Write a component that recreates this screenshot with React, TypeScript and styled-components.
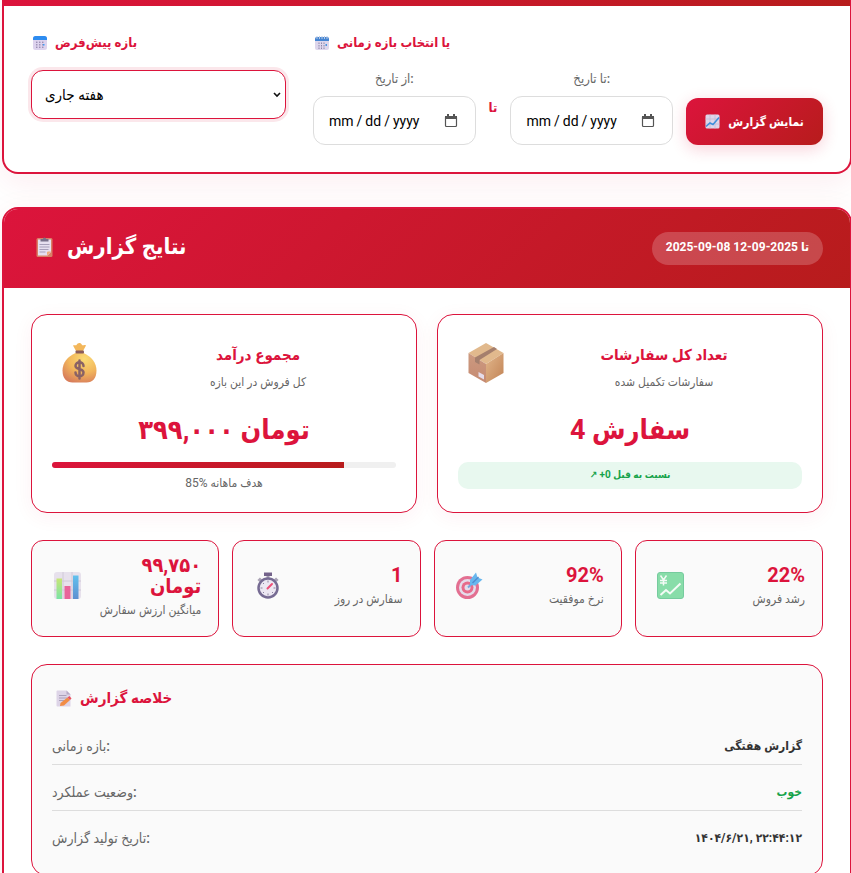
import React from "react";
import styled, { createGlobalStyle } from "styled-components";

const red = "#dc143c";
const fade = "linear-gradient(135deg, #dc143c 0%, #b71c1c 100%)";

const chevron =
  "url(\"data:image/svg+xml,%3Csvg xmlns='http://www.w3.org/2000/svg' viewBox='0 0 8 6'%3E%3Cpath d='M1 1l3 3 3-3' fill='none' stroke='%23111' stroke-width='1.6'/%3E%3C/svg%3E\")";
const calendarGlyph =
  "url(\"data:image/svg+xml,%3Csvg xmlns='http://www.w3.org/2000/svg' viewBox='0 0 14 14'%3E%3Cpath d='M1 2h2V0h2v2h4V0h2v2h2v3H1z' fill='%23555'/%3E%3Crect x='1.5' y='2.5' width='11' height='10' rx='1' fill='none' stroke='%23555' stroke-width='1.2'/%3E%3C/svg%3E\")";

const GlobalStyle = createGlobalStyle`
  *, *::before, *::after { box-sizing: border-box; }
  html { scrollbar-width: none; }
  body { margin: 0; background: #fff; overflow-x: hidden; }
  body, input, select, button {
    font-family: Roboto, "DejaVu Sans Condensed", "DejaVu Sans", sans-serif;
  }
  h2, h3, p, dl, dd, dt { margin: 0; }
  svg { display: block; flex: none; }
`;

const Page = styled.main`
  display: flex;
  flex-direction: column;
  gap: 33px;
  margin: 0 -1px 0 2px;
`;

const FilterCard = styled.section`
  border: 2px solid ${red};
  border-top: 0;
  border-radius: 0 0 16px 16px;
  background: #fff;
  box-shadow: 0 8px 32px rgba(220, 20, 60, 0.08);
`;

const FilterStrip = styled.div`
  height: 6px;
  background: ${fade};
`;

const FilterGrid = styled.div`
  display: grid;
  grid-template-columns: 1fr 2fr;
  gap: 27px;
  padding: 27px;
`;

const Field = styled.div`
  display: flex;
  flex-direction: column;
`;

const FieldTitle = styled.label`
  display: flex;
  align-items: center;
  gap: 8px;
  height: 19px;
  margin-bottom: 18px;
  padding-left: 2px;
  color: ${red};
  font-size: 13px;
  font-weight: 700;
`;

const PresetSelect = styled.select`
  width: 100%;
  height: 49px;
  padding: 0 13px;
  border: 1px solid ${red};
  border-radius: 12px;
  appearance: none;
  background: #fff ${chevron} no-repeat right 4px center / 8px 6px;
  color: #000;
  font-size: 15px;
  outline: none;
  box-shadow: 0 0 0 3px rgba(220, 20, 60, 0.1);
`;

const RangeRow = styled.div`
  display: flex;
  align-items: center;
  gap: 13px;
`;

const DateField = styled.div`
  flex: 1 1 0;
  min-width: 0;
  display: flex;
  flex-direction: column;
  gap: 8px;
`;

const DateLabel = styled.label`
  color: #666;
  font-size: 13px;
  line-height: 18px;
  font-weight: 500;
  text-align: center;
`;

const DateInput = styled.input`
  width: 100%;
  height: 49px;
  padding: 0 17px 0 14px;
  border: 1px solid #ddd;
  border-radius: 12px;
  background: #fff;
  color: #000;
  font-size: 14px;
  &::-webkit-datetime-edit { font-family: Roboto, sans-serif; }
  &::-webkit-datetime-edit-text { padding: 0 2px; }
  &::-webkit-calendar-picker-indicator {
    width: 14px;
    height: 14px;
    padding: 0;
    background: ${calendarGlyph} no-repeat center / 14px 14px;
  }
`;

const Between = styled.span`
  color: ${red};
  font-size: 13px;
  font-weight: 700;
`;

const ShowButton = styled.button`
  display: flex;
  align-items: center;
  justify-content: center;
  align-self: flex-end;
  gap: 8px;
  height: 47px;
  width: 137px;
  padding: 0;
  border: 0;
  border-radius: 12px;
  background: ${fade};
  color: #fff;
  font-size: 12px;
  font-weight: 700;
  white-space: nowrap;
  box-shadow: 0 4px 16px rgba(220, 20, 60, 0.2);
`;

const ResultCard = styled.section`
  border: 2px solid ${red};
  border-radius: 16px;
  background: #fff;
  overflow: hidden;
  box-shadow: 0 8px 32px rgba(220, 20, 60, 0.08);
`;

const ResultHeader = styled.header`
  display: flex;
  align-items: center;
  justify-content: space-between;
  height: 79px;
  padding: 0 27px;
  background: ${fade};
  color: #fff;
`;

const ResultTitle = styled.h2`
  display: flex;
  align-items: center;
  gap: 14px;
  padding: 0 0 4px 5px;
  font-size: 22px;
  line-height: 36px;
`;

const RangeBadge = styled.span`
  padding: 0 14px;
  border-radius: 20px;
  background: rgba(255, 255, 255, 0.2);
  font-size: 12px;
  line-height: 30px;
  height: 33px;
  font-weight: 700;
`;

const ResultBody = styled.div`
  display: flex;
  flex-direction: column;
  gap: 27px;
  padding: 26px 27px;
`;

const StatGrid = styled.div`
  display: grid;
  grid-template-columns: 1fr 1fr;
  gap: 20px;
`;

const StatCard = styled.article`
  height: 199px;
  padding: 26px 20px 20px;
  border: 1px solid ${red};
  border-radius: 16px;
  background: #fff;
  text-align: center;
  box-shadow: 0 4px 20px rgba(220, 20, 60, 0.06);
`;

const StatHead = styled.div`
  display: flex;
  align-items: center;
  gap: 13px;
`;

const StatIcon = styled.div`
  display: flex;
  justify-content: center;
  width: 55px;
  padding-bottom: 10px;
`;

const StatInfo = styled.div`
  flex: 1;
`;

const StatTitle = styled.h3`
  color: ${red};
  font-size: 15px;
  line-height: 28px;
`;

const StatNote = styled.p`
  color: #666;
  font-size: 12px;
  line-height: 26px;
`;

const StatValue = styled.p`
  padding: 10px 0 6px;
  color: ${red};
  font-size: 27px;
  line-height: 51px;
  font-weight: 700;
`;

const Track = styled.div`
  height: 6px;
  border-radius: 3px;
  background: #f0f0f0;
  overflow: hidden;
`;

const TrackFill = styled.div`
  height: 100%;
  background: ${fade};
`;

const TrackNote = styled.p`
  margin-top: 4px;
  color: #666;
  font-size: 12px;
  line-height: 22px;
`;

const Trend = styled.p`
  border-radius: 10px;
  background: #e8f8ef;
  color: #16a34a;
  font-size: 10px;
  line-height: 26px;
  height: 27px;
  font-weight: 700;
`;

const MiniGrid = styled.div`
  display: grid;
  grid-template-columns: repeat(4, 1fr);
  gap: 13px;
`;

const MiniCard = styled.article`
  display: flex;
  align-items: center;
  justify-content: space-between;
  height: 97px;
  padding: 0 17px 0 20px;
  border: 1px solid ${red};
  border-radius: 12px;
  background: #fafafa;
`;

const MiniIcon = styled.div`
  display: flex;
  justify-content: center;
  width: 30px;
  padding-bottom: 6px;
`;

const MiniInfo = styled.div`
  width: min-content;
  text-align: right;
`;

const MiniValue = styled.p`
  color: ${red};
  font-size: 20px;
  line-height: 21px;
  font-weight: 700;
`;

const MiniLabel = styled.p`
  color: #666;
  font-size: 12px;
  line-height: 26px;
  white-space: nowrap;
`;

const Summary = styled.section`
  padding: 18px 20px;
  border: 1px solid ${red};
  border-radius: 16px;
  background: #fafafa;
`;

const SummaryTitle = styled.h3`
  display: flex;
  align-items: center;
  gap: 8px;
  margin-bottom: 14px;
  padding-left: 4px;
  color: ${red};
  font-size: 15px;
  line-height: 30px;
`;

const SummaryRow = styled.div`
  display: flex;
  justify-content: space-between;
  align-items: center;
  height: 46px;
  padding-top: 8px;
  border-bottom: 1px solid #ddd;
  &:first-child { height: 38px; padding-top: 0; }
  &:last-child { border-bottom: 0; }
`;

const SummaryKey = styled.dt`
  color: #666;
  font-size: 14px;
  font-weight: 500;
`;

const SummaryValue = styled.dd<{ $good?: boolean }>`
  color: ${(p) => (p.$good ? "#16a34a" : "#333")};
  font-size: 12px;
  font-weight: 700;
`;

const CalendarIcon = () => (
  <svg width="14" height="14" viewBox="0 0 28 28" aria-hidden="true">
    <rect width="28" height="28" rx="5" fill="#ddd3ee" />
    <path d="M0 8V5a5 5 0 0 1 5-5h18a5 5 0 0 1 5 5v3z" fill="#2d8cf0" />
    <g fill="#9b8fb4">
      {[12, 17, 22].map((y) => [6, 12, 18].map((x) => <rect key={`${x}-${y}`} x={x} y={y - 1} width="3" height="3" rx="1" />))}
    </g>
    <rect x="20" y="16" width="3" height="3" fill="#3d9cf5" />
  </svg>
);

const SpiralCalendarIcon = () => (
  <svg width="14" height="14" viewBox="0 0 28 28" aria-hidden="true">
    <rect y="2" width="28" height="26" rx="4" fill="#ddd6ec" />
    <path d="M0 10V6a4 4 0 0 1 4-4h20a4 4 0 0 1 4 4v4z" fill="#4585d2" />
    <path d="M4 0v6M9 0v6M14 0v6M19 0v6M24 0v6" stroke="#b9cbe6" strokeWidth="2" />
    <g fill="#8d85a8">
      {[13, 18, 23].map((y) => [7, 12, 17].map((x) => <rect key={`${x}-${y}`} x={x} y={y} width="2" height="3" />))}
    </g>
    <rect x="21" y="16" width="3" height="4" fill="#4b93df" />
  </svg>
);

const ChartIcon = () => (
  <svg width="15" height="15" viewBox="0 0 30 30" aria-hidden="true">
    <rect x="1" y="1" width="28" height="28" rx="3" fill="#ded5e9" />
    <path d="M1 10h28M1 20h28M10 1v28M20 1v28" stroke="#c3b9d3" strokeWidth="1.5" />
    <path d="M2 25l8-7 6 3 12-14" fill="none" stroke="#3d8fdb" strokeWidth="3" />
  </svg>
);

const ClipboardIcon = () => (
  <svg width="17" height="20" viewBox="0 0 34 40" aria-hidden="true">
    <rect x="1" y="2" width="32" height="38" rx="3" fill="#d98066" />
    <path d="M4 5h26v25l-7 7H4z" fill="#e6dff0" />
    <path d="M30 29l-8 8v-6a2 2 0 0 1 2-2z" fill="#f0ab77" />
    <path d="M9 9V4h5a3 3 0 0 1 6 0h5v5z" fill="#77708a" />
    <path d="M7 15h20M7 20h20M7 25h18M7 30h12" stroke="#a79fba" strokeWidth="2" />
  </svg>
);

const MoneyBagIcon = () => (
  <svg width="35" height="40" viewBox="0 0 70 80" aria-hidden="true">
    <defs>
      <radialGradient id="bagBody" cx="65%" cy="20%" r="85%">
        <stop offset="0" stopColor="#fbdc75" />
        <stop offset="0.55" stopColor="#f2b65c" />
        <stop offset="1" stopColor="#d97f5b" />
      </radialGradient>
    </defs>
    <path d="M28 16L22 5c3-2 6 1 7-1 2-4 8-6 11 0 2 2 5-2 8 1l-6 11z" fill="#f3b75b" />
    <path d="M27 20C11 27 1 40 1 55c0 16 8 24 20 24h28c12 0 20-8 20-24C69 40 59 27 43 20z" fill="url(#bagBody)" />
    <rect x="27" y="15" width="17" height="6" rx="2" fill="#8a5d5c" />
    <path d="M43 46c0-10-16-10-16 0 0 8 16 4 16 13 0 10-16 10-16 0M35 35v36" fill="none" stroke="#8a6265" strokeWidth="5" strokeLinecap="round" />
  </svg>
);

const PackageIcon = () => (
  <svg width="36" height="40" viewBox="0 0 72 80" aria-hidden="true">
    <defs>
      <linearGradient id="boxSide" x1="0" y1="0" x2="1" y2="1">
        <stop offset="0" stopColor="#e2b78c" />
        <stop offset="1" stopColor="#c18254" />
      </linearGradient>
      <linearGradient id="boxFront" x1="0" y1="0" x2="0" y2="1">
        <stop offset="0" stopColor="#cc9a80" />
        <stop offset="1" stopColor="#c58a72" />
      </linearGradient>
    </defs>
    <path d="M36 0l35 20-35 22L1 20z" fill="#e1b98d" />
    <path d="M1 20l35 22v38L1 60z" fill="url(#boxFront)" />
    <path d="M71 20L36 42v38l35-20z" fill="url(#boxSide)" />
    <path d="M14 29l38-21 6 4-35 22v9l-9-5z" fill="#a57f6d" />
    <path d="M21 58l11 6v9l-11-6z" fill="#e5dcea" />
  </svg>
);

const BarsIcon = () => (
  <svg width="27" height="27" viewBox="0 0 54 54" aria-hidden="true">
    <defs>
      <linearGradient id="barGreen" x1="0" y1="0" x2="0" y2="1">
        <stop offset="0" stopColor="#c7e676" />
        <stop offset="1" stopColor="#7be3a6" />
      </linearGradient>
      <linearGradient id="barBlue" x1="0" y1="0" x2="0" y2="1">
        <stop offset="0" stopColor="#62c1ee" />
        <stop offset="1" stopColor="#5d8fd0" />
      </linearGradient>
    </defs>
    <rect width="54" height="54" rx="6" fill="#e7e1ec" />
    <path d="M0 18h54M0 36h54M18 0v54M36 0v54" stroke="#d0cad8" strokeWidth="2" />
    <path d="M5 13h11v41H5z" fill="url(#barGreen)" />
    <path d="M21 28h12v26H21z" fill="#e8649a" />
    <path d="M38 7h11v47H38z" fill="url(#barBlue)" />
  </svg>
);

const StopwatchIcon = () => (
  <svg width="22" height="27" viewBox="0 0 44 54" aria-hidden="true">
    <path d="M14 1h16v7H14z" fill="#73628a" />
    <path d="M19 8h6v6h-6z" fill="#a7a0b3" />
    <path d="M3 18l5-5M41 18l-5-5" stroke="#aaa3b5" strokeWidth="6" />
    <circle cx="22" cy="32" r="19" fill="#ece7f2" stroke="#766b93" strokeWidth="5" />
    <path d="M22 17v4M22 43v4M7 32h4M33 32h4M12 22l2 2M30 40l2 2M12 42l2-2" stroke="#8c829f" strokeWidth="2" />
    <path d="M21 33l9-9" stroke="#ed4f78" strokeWidth="4" strokeLinecap="round" />
  </svg>
);

const TargetIcon = () => (
  <svg width="27" height="27" viewBox="0 0 54 54" aria-hidden="true">
    <circle cx="23" cy="31" r="23" fill="#e36f91" />
    <circle cx="23" cy="31" r="17" fill="#e5dcea" />
    <circle cx="23" cy="31" r="12" fill="#e76b8b" />
    <circle cx="23" cy="31" r="6" fill="#e5dcea" />
    <path d="M24 31l9-9" stroke="#75a9df" strokeWidth="4" />
    <path d="M28 26V16L40 1l3 10 10 4-14 12z" fill="#68b7ee" />
    <path d="M33 22L45 10" stroke="#508ed0" strokeWidth="3" />
  </svg>
);

const YenIcon = () => (
  <svg width="27" height="27" viewBox="0 0 54 54" aria-hidden="true">
    <rect x="1" y="1" width="52" height="52" rx="5" fill="#88dda9" stroke="#76cb9e" strokeWidth="2" />
    <path d="M7 7l6 9 6-9M13 16v11M6 17h14M6 22h14" fill="none" stroke="#f4fbf6" strokeWidth="3" />
    <path d="M7 46l11-10 8 7 21-20" fill="none" stroke="#f4fbf6" strokeWidth="4" />
  </svg>
);

const MemoIcon = () => (
  <svg width="16" height="17" viewBox="0 0 32 34" aria-hidden="true">
    <path d="M3 1h18l8 8v24H3a2 2 0 0 1-2-2V3a2 2 0 0 1 2-2z" fill="#ddd4e7" />
    <path d="M21 1l8 8h-8z" fill="#b6a9c6" />
    <path d="M6 11h15M6 16h17M6 21h12" stroke="#aaa0ba" strokeWidth="2" />
    <path d="M9 26l14-11 5 5-12 11-8 1z" fill="#f28c45" />
    <path d="M23 15l4-3 4 5-3 3z" fill="#ea5261" />
  </svg>
);

const minis = [
  { icon: <BarsIcon />, value: "۹۹,۷۵۰ تومان", label: "میانگین ارزش سفارش" },
  { icon: <StopwatchIcon />, value: "1", label: "سفارش در روز" },
  { icon: <TargetIcon />, value: "92%", label: "نرخ موفقیت" },
  { icon: <YenIcon />, value: "22%", label: "رشد فروش" },
];

const summary = [
  { label: "بازه زمانی:", value: "گزارش هفتگی" },
  { label: "وضعیت عملکرد:", value: "خوب", good: true },
  { label: "تاریخ تولید گزارش:", value: "۱۴۰۴/۶/۲۱, ۲۲:۴۴:۱۲" },
];

const monthlyGoal = 85;

export default function App() {
  return (
    <>
      <GlobalStyle />
      <Page>
        <FilterCard>
          <FilterStrip />
          <FilterGrid>
            <Field>
              <FieldTitle htmlFor="preset"><CalendarIcon />بازه پیش‌فرض</FieldTitle>
              <PresetSelect id="preset" defaultValue="week">
                <option value="week">هفته جاری</option>
              </PresetSelect>
            </Field>
            <Field>
              <FieldTitle as="div" id="range-title"><SpiralCalendarIcon />یا انتخاب بازه زمانی</FieldTitle>
              <RangeRow role="group" aria-labelledby="range-title">
                <DateField>
                  <DateLabel htmlFor="from">از تاریخ:</DateLabel>
                  <DateInput id="from" type="date" />
                </DateField>
                <Between>تا</Between>
                <DateField>
                  <DateLabel htmlFor="to">تا تاریخ:</DateLabel>
                  <DateInput id="to" type="date" />
                </DateField>
                <ShowButton type="button"><ChartIcon />نمایش گزارش</ShowButton>
              </RangeRow>
            </Field>
          </FilterGrid>
        </FilterCard>

        <ResultCard>
          <ResultHeader>
            <ResultTitle><ClipboardIcon />نتایج گزارش</ResultTitle>
            <RangeBadge>2025-09-08 تا 2025-09-12</RangeBadge>
          </ResultHeader>
          <ResultBody>
            <StatGrid>
              <StatCard>
                <StatHead>
                  <StatIcon><MoneyBagIcon /></StatIcon>
                  <StatInfo>
                    <StatTitle>مجموع درآمد</StatTitle>
                    <StatNote>کل فروش در این بازه</StatNote>
                  </StatInfo>
                </StatHead>
                <StatValue>۳۹۹,۰۰۰ تومان</StatValue>
                <Track><TrackFill style={{ width: `${monthlyGoal}%` }} /></Track>
                <TrackNote>{monthlyGoal}% هدف ماهانه</TrackNote>
              </StatCard>
              <StatCard>
                <StatHead>
                  <StatIcon><PackageIcon /></StatIcon>
                  <StatInfo>
                    <StatTitle>تعداد کل سفارشات</StatTitle>
                    <StatNote>سفارشات تکمیل شده</StatNote>
                  </StatInfo>
                </StatHead>
                <StatValue>4 سفارش</StatValue>
                <Trend>↗ +0 نسبت به قبل</Trend>
              </StatCard>
            </StatGrid>
            <MiniGrid>
              {minis.map((m) => (
                <MiniCard key={m.label}>
                  <MiniIcon>{m.icon}</MiniIcon>
                  <MiniInfo>
                    <MiniValue>{m.value}</MiniValue>
                    <MiniLabel>{m.label}</MiniLabel>
                  </MiniInfo>
                </MiniCard>
              ))}
            </MiniGrid>
            <Summary>
              <SummaryTitle><MemoIcon />خلاصه گزارش</SummaryTitle>
              <dl>
                {summary.map((row) => (
                  <SummaryRow key={row.label}>
                    <SummaryKey>{row.label}</SummaryKey>
                    <SummaryValue $good={row.good}>{row.value}</SummaryValue>
                  </SummaryRow>
                ))}
              </dl>
            </Summary>
          </ResultBody>
        </ResultCard>
      </Page>
    </>
  );
}
